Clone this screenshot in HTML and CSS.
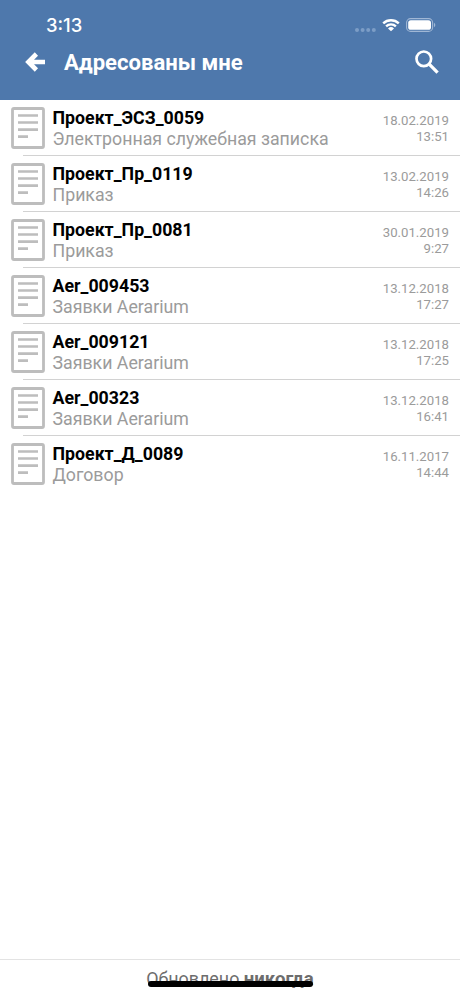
FILE: index.html
```html
<!DOCTYPE html>
<html lang="ru">
<head>
  <meta charset="UTF-8">
  <meta name="viewport" content="width=device-width, initial-scale=1.0">
  <title>Адресованы мне</title>
  <link rel="stylesheet" href="styles.css">
</head>
<body>
  <!-- общая иконка документа -->
  <svg class="sprite" width="0" height="0">
    <symbol id="doc" viewBox="0 0 34 42">
      <rect x="1.5" y="1.5" width="31" height="39" rx="1.5" fill="none" stroke="#bdbdbd" stroke-width="2.8"/>
      <path d="M7 8.5h20M7 15.5h20M7 22.6h20M7 29.6h10" fill="none" stroke="#bdbdbd" stroke-width="2.6"/>
    </symbol>
  </svg>

  <div class="screen">
    <header class="header">
      <div class="status">
        <span class="clock">3:13</span>
        <div class="status-icons">
          <svg class="signal" width="21" height="4" viewBox="0 0 21 4">
            <path d="M2 2h.01M7.6 2h.01M13.2 2h.01M18.8 2h.01" stroke="#7c9dc6" stroke-width="4" stroke-linecap="round"/>
          </svg>
          <svg class="wifi" width="18" height="14" viewBox="0 0 18 14">
            <path d="M1.2 5.3a11.3 11.3 0 0 1 15.6 0M4.1 8.3a7.1 7.1 0 0 1 9.8 0" fill="none" stroke="#fff" stroke-width="2.4"/>
            <path d="M9 13.3L6 10.4a4.3 4.3 0 0 1 6 0z" fill="#fff"/>
          </svg>
          <svg class="battery" width="30" height="14" viewBox="0 0 30 14">
            <rect x=".6" y=".6" width="26" height="12.8" rx="4" fill="none" stroke="#a0b7d5" stroke-width="1.1"/>
            <rect x="2.2" y="2.2" width="22.8" height="9.6" rx="2.6" fill="#fff"/>
            <path d="M28 4.8v4.4c1.8-.8 1.8-3.6 0-4.4z" fill="#a0b7d5"/>
          </svg>
        </div>
      </div>
      <div class="navbar">
        <svg class="back" width="20" height="20" viewBox="0 0 20 20">
          <path d="M20 10H4M11.4 2L3.4 10l8 8" fill="none" stroke="#fff" stroke-width="4.6"/>
        </svg>
        <h1 class="title">Адресованы мне</h1>
        <svg class="search" width="24" height="24" viewBox="0 0 24 24">
          <circle cx="8.8" cy="8.8" r="7.3" fill="none" stroke="#fff" stroke-width="2.7"/>
          <path d="M14.2 14.2l8.4 8.4" fill="none" stroke="#fff" stroke-width="3.3"/>
        </svg>
      </div>
    </header>

    <main class="list">
      <div class="item">
        <svg class="doc"><use href="#doc"/></svg>
        <div class="info"><div class="name">Проект_ЭСЗ_0059</div><div class="type">Электронная служебная записка</div></div>
        <div class="date">18.02.2019<br>13:51</div>
      </div>
      <div class="item">
        <svg class="doc"><use href="#doc"/></svg>
        <div class="info"><div class="name">Проект_Пр_0119</div><div class="type">Приказ</div></div>
        <div class="date">13.02.2019<br>14:26</div>
      </div>
      <div class="item">
        <svg class="doc"><use href="#doc"/></svg>
        <div class="info"><div class="name">Проект_Пр_0081</div><div class="type">Приказ</div></div>
        <div class="date">30.01.2019<br>9:27</div>
      </div>
      <div class="item">
        <svg class="doc"><use href="#doc"/></svg>
        <div class="info"><div class="name">Aer_009453</div><div class="type">Заявки Aerarium</div></div>
        <div class="date">13.12.2018<br>17:27</div>
      </div>
      <div class="item">
        <svg class="doc"><use href="#doc"/></svg>
        <div class="info"><div class="name">Aer_009121</div><div class="type">Заявки Aerarium</div></div>
        <div class="date">13.12.2018<br>17:25</div>
      </div>
      <div class="item">
        <svg class="doc"><use href="#doc"/></svg>
        <div class="info"><div class="name">Aer_00323</div><div class="type">Заявки Aerarium</div></div>
        <div class="date">13.12.2018<br>16:41</div>
      </div>
      <div class="item">
        <svg class="doc"><use href="#doc"/></svg>
        <div class="info"><div class="name">Проект_Д_0089</div><div class="type">Договор</div></div>
        <div class="date">16.11.2017<br>14:44</div>
      </div>
    </main>

    <footer class="footer">
      <span>Обновлено <b>никогда</b></span>
      <div class="home-bar"></div>
    </footer>
  </div>
</body>
</html>
```
FILE: styles.css
```css
* {
  margin: 0;
  padding: 0;
  box-sizing: border-box;
}
body {
  font-family: Roboto, sans-serif;
  background: #fff;
}
.sprite {
  display: block;
}
.screen {
  width: 460px;
  height: 996px;
  display: flex;
  flex-direction: column;
  overflow: hidden;
}
.header {
  height: 100px;
  background: #4e78ac;
  color: #fff;
  flex-shrink: 0;
}
.status {
  height: 42px;
  padding: 14px 24px 0 46px;
  display: flex;
  justify-content: space-between;
}
.clock {
  font-family: Inter, sans-serif;
  font-size: 18.4px;
  line-height: 23px;
  font-weight: 500;
}
.status-icons {
  display: flex;
  align-items: flex-start;
  padding-top: 4px;
}
.signal {
  margin-top: 10px;
}
.wifi {
  margin: 0 6px;
}
.navbar {
  height: 40px;
  padding: 0 21px 0 25px;
  display: flex;
  align-items: center;
}
.title {
  margin-left: 19px;
  flex: 1;
  font-size: 22.1px;
  line-height: 26px;
  font-weight: 700;
}
.list {
  flex: 1;
}
.item {
  height: 56px;
  padding: 7px 11px 0;
  display: flex;
  align-items: flex-start;
  background: linear-gradient(#d2d2d2, #d2d2d2) 23px 100% / 100% 1px no-repeat;
}
.item:last-child {
  background: none;
}
.doc {
  width: 34px;
  height: 42px;
  margin-right: 7.5px;
  flex-shrink: 0;
}
.info {
  flex: 1;
  padding-top: 1px;
  white-space: nowrap;
}
.name {
  font-size: 17.75px;
  line-height: 21px;
  font-weight: 700;
  color: #000;
}
.type {
  font-size: 17.75px;
  line-height: 21px;
  color: #9b9b9b;
}
.date {
  padding-top: 6px;
  font-size: 13.2px;
  line-height: 16px;
  text-align: right;
  color: #9b9b9b;
}
.footer {
  position: relative;
  height: 37px;
  padding-top: 8px;
  border-top: 1px solid #e3e3e3;
  text-align: center;
  font-size: 17.9px;
  line-height: 21px;
  color: #6d6d6d;
}
.footer b {
  font-size: 18.6px;
}
/* индикатор поверх подписи */
.home-bar {
  position: absolute;
  left: 148px;
  top: 21px;
  width: 165px;
  height: 6px;
  border-radius: 3px;
  background: #000;
}
```
